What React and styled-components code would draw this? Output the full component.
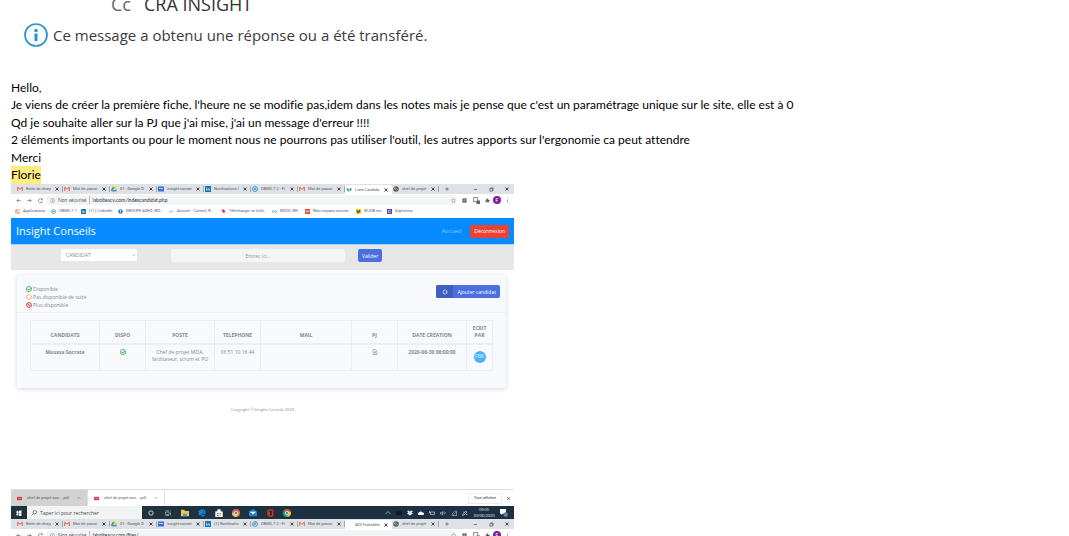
import React from 'react';
import styled, { createGlobalStyle } from 'styled-components';

const Global = createGlobalStyle`
  * { box-sizing: border-box; }
  body { margin: 0; background: #fff; }
  button, input, select { font: inherit; color: inherit; margin: 0; padding: 0; border: 0; background: none; border-radius: 0; }
  a { color: inherit; text-decoration: none; }
  svg { display: block; flex: none; }
`;

const Page = styled.main`
  height: 100vh;
  overflow: hidden;
  font-family: 'Open Sans', 'Noto Sans', sans-serif;
`;
const CopyLine = styled.div`
  display: flex;
  gap: 13px;
  margin-top: -8px;
  padding-left: 111px;
  font-size: 18px;
  line-height: 24px;
  color: #333;
`;
const CopyLabel = styled.span`
  color: #666;
`;
const Notice = styled.div`
  display: flex;
  align-items: center;
  gap: 5px;
  margin-top: 7px;
  padding-left: 24px;
  font-size: 15px;
  line-height: 24px;
  color: #3b3b3b;
`;
const Message = styled.section`
  padding: 32px 11px 0;
  font-family: Lato, 'Open Sans', sans-serif;
  font-size: 12px;
  font-variant-ligatures: none;
  color: #000;
`;
const Line = styled.p`
  margin: 0;
  line-height: 18px;
  white-space: nowrap;
  &:nth-child(odd) { line-height: 17px; }
`;
const Mark = styled.mark`
  display: inline-block;
  color: #000;
  background: #ffec80;
`;
const Capture = styled.section`
  width: calc(100% - 22px);
  max-width: 503px;
  margin-left: 11px;
  font-size: 5px;
  line-height: 8px;
  color: #858796;
  white-space: nowrap;
`;

/* Browser window */
const Strip = styled.div`
  display: flex;
  align-items: center;
  height: 10px;
  padding-left: 5px;
  background: #dee1e6;
  color: #555a60;
  font: 4px/8px Roboto, sans-serif;
`;
const TabBox = styled.div`
  display: flex;
  align-items: center;
  gap: 3px;
  flex: 0 1 47px;
  min-width: 0;
  height: ${(p) => (p.$active ? 9 : 6)}px;
  align-self: ${(p) => (p.$active ? 'flex-end' : 'center')};
  padding: 0 3px 0 1px;
  border-right: 1px solid ${(p) => (p.$active ? '#fff' : '#a5a9ae')};
  border-radius: ${(p) => (p.$active ? '2px 2px 0 0' : '0')};
  background: ${(p) => (p.$active ? '#fff' : 'transparent')};
`;
const TabTitle = styled.button`
  flex: 1;
  min-width: 0;
  overflow: hidden;
  text-align: left;
  white-space: nowrap;
`;
const IconButton = styled.button`
  display: grid;
  place-items: center;
  flex: none;
  width: ${(p) => p.$w || 5}px;
`;
const Push = styled.div`
  flex: 1;
`;
const Address = styled.div`
  display: flex;
  align-items: center;
  height: 12px;
  padding: 0 2px;
  background: #fff;
  color: #5f6368;
  font: 5px/8px Roboto, sans-serif;
`;
const Omnibox = styled.label`
  display: flex;
  align-items: center;
  gap: 3px;
  flex: 1;
  height: 10px;
  padding-left: 4px;
  border-radius: 5px;
  background: #f3f4f5;
  font: 5px/8px Lato, sans-serif;
`;
const UrlInput = styled.input`
  flex: 1;
  height: 8px;
  padding-left: 2px;
  border-left: 1px solid #b8bbbf;
  color: #303236;
`;
const Bookmarks = styled.nav`
  display: flex;
  align-items: center;
  height: 12px;
  padding: 0 0 2px 4px;
  background: #fff;
  color: #55595e;
  font: 4px/8px Roboto, sans-serif;
`;
const Bookmark = styled.a`
  display: flex;
  align-items: center;
  gap: 3px;
  flex: 0 0 ${(p) => p.$w}px;
`;

/* Site */
const SiteHeader = styled.header`
  display: flex;
  align-items: center;
  height: 27px;
  padding: 0 5px;
  border-bottom: 1px solid #a6cdf2;
  background: #078bff;
  color: #fff;
`;
const Brand = styled.a`
  flex: 1;
  font-size: 11px;
  line-height: 16px;
`;
const HomeLink = styled.a`
  margin-right: 9px;
  font-size: 6px;
  color: #83c5ff;
`;
const Button = styled.button`
  display: flex;
  align-items: center;
  justify-content: center;
  height: 13px;
  padding: 0 4px;
  border-radius: 2px;
  background: ${(p) => p.$color};
  color: #fff;
  font-size: 5px;
  white-space: nowrap;
`;
const SearchForm = styled.form`
  display: flex;
  height: 25px;
  padding: 4px 0 0 50px;
  background: #e7e7e7;
`;
const SelectWrap = styled.label`
  display: flex;
  align-items: center;
  width: 76px;
  height: 12px;
  margin-right: 34px;
  padding: 0 1px 0 5px;
  border-radius: 2px;
  background: #fff;
`;
const Select = styled.select`
  flex: 1;
  appearance: none;
  outline: 0;
`;
const Query = styled.input`
  width: 174px;
  height: 13px;
  margin-right: 13px;
  border-radius: 2px;
  background: #f5f5f5;
  text-align: center;
  &::placeholder { color: #909298; opacity: 1; }
`;
const Card = styled.section`
  margin: 5px 8px 0 6px;
  border-radius: 2px;
  background: #f8f9fc;
  box-shadow: 0 1px 5px #d5d8e2;
`;
const CardTop = styled.div`
  display: flex;
  justify-content: space-between;
  align-items: flex-start;
  height: 38px;
  padding: 10px 6px 3px 9px;
  border-bottom: 1px solid #eff0f5;
`;
const Legend = styled.ul`
  margin: 0;
  padding: 0;
  list-style: none;
`;
const LegendItem = styled.li`
  display: flex;
  align-items: center;
  gap: 1px;
`;
const AddButton = styled(Button)`
  padding: 0 4px 0 0;
  gap: 4px;
  overflow: hidden;
`;
const AddIcon = styled.span`
  display: grid;
  place-items: center;
  width: 17px;
  height: 13px;
  background: #3e5fbe;
`;
const TableWrap = styled.div`
  padding: 7px 14px 17px 13px;
`;
const Table = styled.table`
  width: 100%;
  table-layout: fixed;
  border-collapse: collapse;
  text-align: center;
  line-height: 7px;
  th, td { padding: 0; border: 1px solid #eceef4; }
  thead th { height: 23px; padding-bottom: 4px; vertical-align: bottom; border-bottom: 2px solid #eceef4; }
  tbody th, tbody td { height: 27px; padding-top: 4px; vertical-align: top; }
  td svg { margin: 0 auto; }
`;
const Avatar = styled.span`
  display: grid;
  place-items: center;
  width: 12px;
  height: 12px;
  margin: 2px auto 0;
  border-radius: 50%;
  background: #46b2fa;
  color: #d9f0ff;
`;
const Footer = styled.footer`
  padding: 18px 0 75px;
  text-align: center;
  font-size: 4px;
`;

/* Downloads and taskbar */
const Downloads = styled.div`
  display: flex;
  align-items: center;
  height: 17px;
  border-top: 1px solid #dcdcdc;
  color: #5b5b5b;
  font: 4px/8px Roboto, sans-serif;
`;
const Download = styled.button`
  display: flex;
  align-items: center;
  gap: 5px;
  flex: 0 1 77px;
  height: 16px;
  padding: 0 6px;
  text-align: left;
  border-right: 1px solid #dedede;
  background: ${(p) => (p.$hover ? '#d2d2d2' : '#fff')};
`;
const DownloadName = styled.span`
  flex: 1;
`;
const ShowAll = styled.button`
  width: 34px;
  height: 11px;
  border: 1px solid #ededed;
  color: #333;
`;
const Taskbar = styled.div`
  display: flex;
  align-items: center;
  height: 13px;
  padding-right: 4px;
  background: linear-gradient(90deg, #1e333b, #1d2f45);
  color: #e5eaee;
`;
const TaskSearch = styled.label`
  display: flex;
  align-items: center;
  gap: 3px;
  flex: 0 1 115px;
  height: 13px;
  padding-left: 4px;
  background: #f2f3f3;
  color: #4c4c4c;
`;
const TaskInput = styled.input`
  flex: 1;
  min-width: 0;
  &::placeholder { color: #4c4c4c; opacity: 1; }
`;
const Clock = styled.time`
  width: 28px;
  text-align: center;
  font-size: 4px;
  line-height: 6px;
`;
const Profile = styled.button`
  width: 8px;
  height: 8px;
  margin: 0 1px;
  border-radius: 50%;
  background: #7b1fa2;
  color: #fff;
`;

const s = (c, w = 1.3) => ({ fill: 'none', stroke: c, strokeWidth: w });
const glyphs = {
  gmail: <><path d="M1 2h10v8H1z" fill="#f3e4e2" /><path d="M1.500 10V2.500L6 6.500l4.500-4V10" {...s('#d8483c', 1.8)} /></>,
  drive: <><path d="M4 1h4l4 7H8z" fill="#f9c51d" /><path d="M4 1 0 8l2 3 4-7z" fill="#1da462" /><path d="M4 8h8l-2 3H2z" fill="#4688f1" /></>,
  calendar: <><path d="M0 1h12v10H0z" fill="#3c6fd9" /><path d="M2 4h8v2H2z" fill="#bcd0fb" /></>,
  linkedin: <><rect width="12" height="12" rx="1" fill="#1475b5" /><path d="M3 5v4M3 2.500v1M6 9V5M6 7c0-2 3-2 3 0v2" {...s('#fff', 1.4)} /></>,
  obms: <><circle cx="6" cy="6" r="5" {...s('#3a9fce', 1.8)} /><path d="M3 6h6M4 8l4-5" {...s('#2c7fb0', 1.6)} /></>,
  liste: <><path d="M0 3h5l2 6H4z" fill="#46ad5c" /><path d="M6 3h6L9 9z" fill="#3184d4" /></>,
  globe: <><circle cx="6" cy="6" r="5.500" fill="#55595e" /><path d="M2 4h4l1 2-3 1zM7 9l3-3" {...s('#d8dadd', 1)} /></>,
  apps: <><path d="M1 1h3v3H1zM8 8h3v3H8z" fill="#e5533d" /><path d="M4.500 1h3v3h-3zM1 8h3v3H1z" fill="#e9a82f" /><path d="M8 1h3v3H8zM1 4.500h3v3H1zM4.500 8h3v3h-3z" fill="#f0855e" /></>,
  adeo: <><circle cx="6" cy="6" r="5.500" fill="#3578bd" /><path d="M6 2v5M6 8.500V10" {...s('#fff', 2)} /></>,
  accueil: <path d="M1 8c3 1 2-4 5-3s2 3 5-1M2 5l3 1" {...s('#5fa5bd', 1.8)} />,
  download: <path d="m1 2 5-1 5 4-3 2 1 4-5-3z" fill="#dc3340" />,
  mooc: <><circle cx="3" cy="6" r="2.200" {...s('#33a6bc', 1.5)} /><circle cx="9" cy="6" r="2.200" {...s('#33a6bc', 1.5)} /></>,
  espace: <><path d="M0 0h12v12H0z" fill="#e6502e" /><path d="m2 3 2 5 2-4 2 4 2-5" {...s('#fff', 1.3)} /></>,
  wjob: <><path d="M0 0h12v12H0z" fill="#f2ce17" /><path d="m3 3 1 6 5-6-2 6" {...s('#222', 1.8)} /></>,
  digi: <><path d="M0 0h12v12H0z" fill="#5146ab" /><path d="M4 3v6h2c3 0 3-6 0-6z" {...s('#fff', 1.4)} /></>,
  close: <path d="m3 3 6 6M9 3 3 9" {...s('#444', 2)} />,
  plus: <path d="M6 1v10M1 6h10" {...s('#444', 1.8)} />,
  min: <path d="M2 6h8" {...s('#444', 1.6)} />,
  max: <path d="M2 4h6v6H2zM4 4V2h6v6H8" {...s('#444', 1.4)} />,
  back: <path d="M11 6H2M6 2 2 6l4 4" {...s('#666', 1.6)} />,
  forward: <path d="M1 6h9M6 2l4 4-4 4" {...s('#666', 1.6)} />,
  reload: <path d="M10 3a5 5 0 1 0 1 4M11 1v3H7" {...s('#666', 1.6)} />,
  info: <><circle cx="6" cy="6" r="5" {...s('#777', 1.1)} /><path d="M6 5v4M6 3v1" {...s('#777', 1.2)} /></>,
  star: <path d="m6 1 1.500 3.300 3.500.4-2.600 2.400.8 3.600L6 8.900 2.800 10.700l.8-3.600L1 4.700l3.500-.4z" {...s('#777', 1)} />,
  note: <><path d="M1 1h10v10H1z" fill="#555" /><path d="M3 4h6M3 6h6M3 8h4" {...s('#ddd', 1)} /></>,
  translate: <><path d="M1 1h7v7H1z" {...s('#777', 1.5)} /><path d="M6 6h6v6H6z" fill="#5d6370" /></>,
  puzzle: <path d="M1 4h3V1h3v3h4v3H9v4H6V9H3v2H1V8h2V6H1z" fill="#555" />,
  dots: <path d="M5 1h2v2H5zM5 5h2v2H5zM5 9h2v2H5z" fill="#777" />,
  check: <><circle cx="6" cy="6" r="5" {...s('#2f9e44', 1.6)} /><path d="m3.500 6 2 2 4-4" {...s('#2f9e44', 1.8)} /></>,
  wait: <circle cx="6" cy="6" r="4.800" strokeDasharray="6 1.500" {...s('#f7b54a', 2)} />,
  ban: <><circle cx="6" cy="6" r="4.800" {...s('#ea2e37', 2)} /><path d="m3 3 6 6" {...s('#ea2e37', 2)} /></>,
  ring: <circle cx="6" cy="6" r="4" strokeDasharray="5 1" {...s('#d5def8', 2)} />,
  file: <><path d="M2 1h5l3 3v7H2z" {...s('#858796', 1.2)} /><path d="M4 8c2-1 2-3 2-4 0 2 1 3 2 4z" {...s('#858796', 1)} /></>,
  chevron: <path d="m2 4 4 4 4-4" {...s('#777', 1.4)} />,
  up: <path d="m2 8 4-4 4 4" {...s('#666', 1.6)} />,
  upLight: <path d="m1 8 5-5 5 5" {...s('#ccd6dd', 1.4)} />,
  pdf: <><path d="M0 2h12v8H0z" fill="#d43a48" /><path d="M2 6h8" {...s('#f4b8bd', 1.2)} /></>,
  win: <path d="m1 2 4-.5V6H1zM6 1.300l5-.6V6H6zM1 6.700h4v4.500l-4-.5zM6 6.700h5V12l-5-.7z" fill="#fff" />,
  search: <><circle cx="7.500" cy="4.500" r="3.500" {...s('#444', 1.2)} /><path d="m5 7-4 4" {...s('#444', 1.3)} /></>,
  cortana: <circle cx="6" cy="6" r="4.300" {...s('#fff', 1.5)} />,
  tasks: <path d="M1 4h7v5H1zM1 1.500h7M1 11h7M11 1v2M11 5v6" {...s('#bcc9cf', 1.2)} />,
  folder: <><path d="M0 1h5l1 2h6v8H0z" fill="#f4c64e" /><path d="M3 7h6v4H3z" fill="#4b9cd3" /></>,
  edge: <path d="M1.500 5C3 0 10.500 0 10.500 6H4M1.500 9c1-5 4-6 6-5M4 6c0 5 4 5 6 3.500" {...s('#1788de', 2)} />,
  store: <><path d="M1 4h10v8H1zM4 4V1h4v3" fill="#fff" stroke="#fff" /><path d="M3 6h2.500v2H3z" fill="#e8533b" /><path d="M6.500 6H9v2H6.500z" fill="#62ae45" /><path d="M3 9h2.500v2H3z" fill="#2a91d8" /><path d="M6.500 9H9v2H6.500z" fill="#f3bd29" /></>,
  canary: <><circle cx="6" cy="6" r="6" fill="#ee7332" /><path d="M0 6a6 6 0 0 0 7 6l3-5z" fill="#f5c336" /><path d="M1 3a6 6 0 0 1 9-1L7 5z" fill="#c94a7a" /><circle cx="6" cy="6" r="2.700" fill="#5a89d9" stroke="#fff" /></>,
  mail: <><path d="M0 4 6 0l6 4v7H0z" fill="#1688d5" /><path d="M1 4h10L6 8z" fill="#fff" /></>,
  office: <path d="M4 10 7 11.200 10 10V2L7 1 3 2.500v6.500l2-1V4" {...s('#dc3420', 2)} />,
  chrome: <><circle cx="6" cy="6" r="6" fill="#35a853" /><path d="M1 3a6 6 0 0 1 10.500 1H6z" fill="#e94335" /><path d="M11.500 4A6 6 0 0 1 6 12l2.500-5L7 4z" fill="#fabc16" /><circle cx="6" cy="6" r="2.500" fill="#4285f4" stroke="#fff" /></>,
  screen: <path d="M0 2h12v8H0z" fill="#101923" />,
  dropbox: <path d="m3 1 3 2 3-2 3 2-3 2 3 2-3 2-3 2-3-2-3-2 3-2-3-2z" fill="#e4ebf0" />,
  cloud: <path d="M2 10a2.500 2.500 0 0 1 0-5 4 4 0 0 1 7 0 2.500 2.500 0 0 1 1 5z" fill="#fff" />,
  battery: <path d="M3 4h8v5H3zM1 2v4h2" {...s('#cfdae1', 1.3)} />,
  sound: <path d="M1 5v3h2l2 2V3L3 5zM7 4c1 1 1 3 0 4M9 3c2 2 2 4 0 6" {...s('#cfdae1', 1.1)} />,
  wifi: <path d="M2 11C2 6 6 2 11 2v9zM5 11c0-3 3-6 6-6" {...s('#aebcc8', 1.2)} />,
  pen: <path d="m1 11 3-1 6-6-2-2-6 6zM5 4H2M8 9h3" {...s('#cfdae1', 1.3)} />,
  notif: <><path d="M0 0h9v7H4L2 9V7H0z" fill="#fff" /><circle cx="8.500" cy="8.500" r="3.500" fill="#6a7885" /></>,
};
const Icon = ({ name, size = 5 }) => (
  <svg width={size} height={size} viewBox="0 0 12 12" aria-hidden="true">{glyphs[name]}</svg>
);

const tabsFor = (notif, current) => [
  ['gmail', 'Boîte de récep'], ['gmail', 'Mot de passe'], ['drive', '01 - Google D'],
  ['calendar', 'insight-consei'], ['linkedin', notif], ['obms', 'OBMS 7.2 - Fi'],
  ['gmail', 'Mot de passe'], [current === 'Liste Candida' ? 'liste' : null, current, true], ['globe', 'chef de projet'],
];

function BrowserTop({ notif, current, url }) {
  return (
    <>
      <Strip>
        {tabsFor(notif, current).map(([icon, title, active], i) => (
          <TabBox key={i} $active={active}>
            <Icon name={icon} size={6} />
            <TabTitle>{title}</TabTitle>
            <IconButton aria-label="Fermer l'onglet"><Icon name="close" size={6} /></IconButton>
          </TabBox>
        ))}
        <IconButton $w={16} aria-label="Nouvel onglet"><Icon name="plus" size={4} /></IconButton>
        <Push />
        <IconButton $w={16} aria-label="Réduire"><Icon name="min" /></IconButton>
        <IconButton $w={16} aria-label="Agrandir"><Icon name="max" /></IconButton>
        <IconButton $w={15} aria-label="Fermer"><Icon name="close" size={6} /></IconButton>
      </Strip>
      <Address>
        <IconButton $w={11} aria-label="Précédent"><Icon name="back" /></IconButton>
        <IconButton $w={11} aria-label="Suivant"><Icon name="forward" /></IconButton>
        <IconButton $w={11} aria-label="Actualiser"><Icon name="reload" /></IconButton>
        <Omnibox>
          <Icon name="info" />
          <span>Non sécurisé</span>
          <UrlInput defaultValue={url} />
          <IconButton $w={8} aria-label="Favori"><Icon name="star" /></IconButton>
        </Omnibox>
        <IconButton $w={14} aria-label="Notes"><Icon name="note" /></IconButton>
        <IconButton $w={11} aria-label="Traduire"><Icon name="translate" size={7} /></IconButton>
        <IconButton $w={10} aria-label="Extensions"><Icon name="puzzle" /></IconButton>
        <Profile>F</Profile>
        <IconButton $w={10} aria-label="Menu"><Icon name="dots" /></IconButton>
      </Address>
    </>
  );
}

const bookmarks = [
  ['apps', 'Applications', 36], ['obms', 'OBMS 7.1', 30], ['linkedin', '(11) LinkedIn', 37],
  ['adeo', 'GROUPE ADEO (RO...', 51], ['accueil', 'Accueil - Conseil, R...', 52],
  ['download', 'Télécharger un fichi...', 51], ['mooc', 'MOOC RH', 33],
  ['espace', 'Mon espace recrute...', 51], ['wjob', 'WJOB rec', 31], ['digi', 'Digiforma', 27],
];
const columns = [
  ['CANDIDATS', 69], ['DISPO', 46], ['POSTE', 69], ['TELEPHONE', 46],
  ['MAIL', 91], ['PJ', 46], ['DATE CREATION', 69], ['ECRIT PAR', 26],
];
const apps = ['cortana', 'tasks', 'folder', 'edge', 'store', 'canary', 'mail', 'office', 'chrome'];
const tray = ['upLight', 'screen', 'dropbox', 'cloud', 'battery', 'sound', 'wifi', 'pen'];

export default function App() {
  return (
    <Page>
      <Global />
      <CopyLine><CopyLabel>Cc</CopyLabel><span>CRA INSIGHT</span></CopyLine>
      <Notice>
        <svg width="24" height="24" viewBox="0 0 24 24" aria-hidden="true">
          <circle cx="12" cy="12" r="11" fill="#f8fafc" stroke="#2b93d1" strokeWidth="1.700" />
          <path d="M10.500 6h3v3h-3zM10.500 10.500h3V18h-3z" fill="#2b93d1" />
        </svg>
        <span>Ce message a obtenu une réponse ou a été transféré.</span>
      </Notice>
      <Message>
        <Line>Hello,</Line>
        <Line>Je viens de créer la première fiche, l'heure ne se modifie pas,idem dans les notes mais je pense que c'est un paramétrage unique sur le site, elle est à 0</Line>
        <Line>Qd je souhaite aller sur la PJ que j'ai mise, j'ai un message d'erreur !!!!</Line>
        <Line>2 éléments importants ou pour le moment nous ne pourrons pas utiliser l'outil, les autres apports sur l'ergonomie ca peut attendre</Line>
        <Line>Merci</Line>
        <Line><Mark>Florie</Mark></Line>
      </Message>
      <Capture>
        <BrowserTop notif="Notifications |" current="Liste Candida" url="laboiteacv.com/indexcandidat.php" />
        <Bookmarks>
          {bookmarks.map(([icon, label, w]) => (
            <Bookmark key={label} href="#" $w={w}><Icon name={icon} />{label}</Bookmark>
          ))}
        </Bookmarks>
        <SiteHeader>
          <Brand href="#">Insight Conseils</Brand>
          <HomeLink href="#">Accueil</HomeLink>
          <Button $color="#e94335">Déconnexion</Button>
        </SiteHeader>
        <SearchForm>
          <SelectWrap>
            <Select aria-label="Type de recherche"><option>CANDIDAT</option></Select>
            <Icon name="chevron" size={4} />
          </SelectWrap>
          <Query aria-label="Recherche" placeholder="Entrez ici..." />
          <Button type="button" $color="#4a6fdf">Valider</Button>
        </SearchForm>
        <Card>
          <CardTop>
            <Legend>
              <LegendItem><Icon name="check" size={6} />Disponible</LegendItem>
              <LegendItem><Icon name="wait" size={6} />Pas disponible de suite</LegendItem>
              <LegendItem><Icon name="ban" size={6} />Plus disponible</LegendItem>
            </Legend>
            <AddButton $color="#4a6fdf"><AddIcon><Icon name="ring" size={6} /></AddIcon>Ajouter candidat</AddButton>
          </CardTop>
          <TableWrap>
            <Table>
              <colgroup>{columns.map(([c, w]) => <col key={c} width={w} />)}</colgroup>
              <thead>
                <tr>
                  {columns.map(([c]) => (
                    <th key={c} scope="col">{c === 'ECRIT PAR' ? <>ECRIT<br />PAR</> : c}</th>
                  ))}
                </tr>
              </thead>
              <tbody>
                <tr>
                  <th scope="row">Moussa Socrate</th>
                  <td><Icon name="check" size={6} /></td>
                  <td>Chef de projet MOA,<br />facilitateur, scrum et PO</td>
                  <td>06 51 10 16 44</td>
                  <td />
                  <td><Icon name="file" size={6} /></td>
                  <td><b>2020-06-30 00:00:00</b></td>
                  <td><Avatar>FBR</Avatar></td>
                </tr>
              </tbody>
            </Table>
          </TableWrap>
        </Card>
        <Footer>Copyright © Insight-Conseils 2020</Footer>
        <Downloads>
          <Download $hover><Icon name="pdf" /><DownloadName>chef de projet-soc....pdf</DownloadName><Icon name="up" size={4} /></Download>
          <Download><Icon name="pdf" /><DownloadName>chef de projet-soc....pdf</DownloadName><Icon name="up" size={4} /></Download>
          <Push />
          <ShowAll>Tout afficher</ShowAll>
          <IconButton $w={12} aria-label="Fermer la barre"><Icon name="close" /></IconButton>
        </Downloads>
        <Taskbar>
          <IconButton $w={16} aria-label="Démarrer"><Icon name="win" size={6} /></IconButton>
          <TaskSearch><Icon name="search" size={6} /><TaskInput placeholder="Taper ici pour rechercher" /></TaskSearch>
          {apps.map((a) => <IconButton key={a} $w={17} aria-label={a}><Icon name={a} size={a === 'cortana' || a === 'tasks' ? 6 : 8} /></IconButton>)}
          <Push />
          {tray.map((a) => <IconButton key={a} $w={11} aria-label={a}><Icon name={a} size={6} /></IconButton>)}
          <Clock>09:05<br />30/06/2020</Clock>
          <IconButton $w={12} aria-label="Notifications"><Icon name="notif" size={8} /></IconButton>
        </Taskbar>
        <BrowserTop notif="(1) Notificatio" current="403 Forbidden" url="laboiteacv.com/files/" />
      </Capture>
    </Page>
  );
}
